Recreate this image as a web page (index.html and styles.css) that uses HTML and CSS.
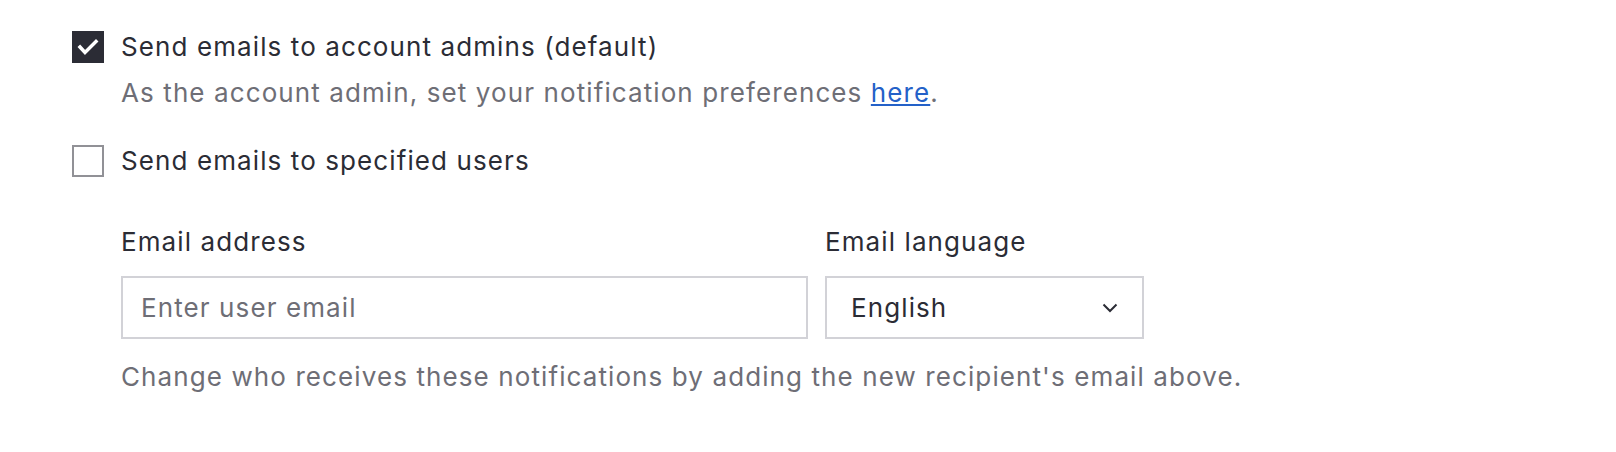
FILE: index.html
```html
<!DOCTYPE html>
<html>

<head>
  <title>Notification recipients</title>
  <link rel="stylesheet" href="styles.css">
</head>
<body>
  <div class="recipients">
    <div class="option">
      <div class="checkbox checked">
        <svg width="32" height="32" viewBox="0 0 32 32">
          <polyline points="8,16 13,21.5 24,10.5" fill="none" stroke="#fff" stroke-width="3.5" stroke-linecap="square"></polyline>
        </svg>
      </div>
      <div class="option-text">
        <div class="label">Send emails to account admins (default)</div>
        <div class="desc">As the account admin, set your notification preferences <a href="#">here</a>.</div>
      </div>
    </div>

    <div class="option second">
      <div class="checkbox"></div>
      <div class="option-text">
        <div class="label">Send emails to specified users</div>
      </div>
    </div>

    <div class="fields">
      <div class="field email">
        <label for="email">Email address</label>
        <input id="email" type="text" placeholder="Enter user email">
      </div>
      <div class="field language">
        <label>Email language</label>
        <div class="select">
          <span>English</span>
          <svg width="16" height="10" viewBox="0 0 16 10">
            <polyline points="1.5,1.5 8,8 14.5,1.5" fill="none" stroke="#2b2c35" stroke-width="2"></polyline>
          </svg>
        </div>
      </div>
    </div>
    <div class="help">Change who receives these notifications by adding the new recipient's email above.</div>
  </div>
</body>
</html>
```

FILE: styles.css
```css
body {
  margin: 0;
  background: #fff;
  font-family: Inter, "Noto Sans", sans-serif;
  font-size: 26px;
  letter-spacing: 1.1px;
  color: #2b2c35;
}

.recipients {
  padding: 31px 0 0 72px;
}

.option {
  display: flex;
  align-items: flex-start;
  gap: 17px;
}
.option.second {
  margin-top: 36px;
}

.checkbox {
  width: 32px;
  height: 32px;
  box-sizing: border-box;
  border: 2px solid #919196;
  flex-shrink: 0;
}
.checkbox.checked {
  background: #2b2c35;
  border-color: #2b2c35;
}
.checkbox svg {
  display: block;
  margin: -2px;
}

.label {
  line-height: 32px;
}
.desc {
  margin-top: 14px;
  line-height: 32px;
  color: #6e6e76;
}
.desc a {
  color: #2461c8;
}

.fields {
  display: flex;
  gap: 17px;
  margin: 49px 0 0 49px;
}
.field label {
  display: block;
  line-height: 32px;
  margin-bottom: 18px;
}
.field input {
  display: block;
  box-sizing: border-box;
  width: 687px;
  height: 63px;
  margin: 0;
  padding: 0 18px;
  border: 2px solid #d2d2d7;
  border-radius: 0;
  font-family: inherit;
  font-size: 26px;
  letter-spacing: 1.1px;
  color: #2b2c35;
  outline: none;
}
.field input::placeholder {
  color: #6e6e76;
}

.select {
  box-sizing: border-box;
  width: 319px;
  height: 63px;
  padding: 0 24px;
  border: 2px solid #d2d2d7;
  display: flex;
  align-items: center;
  justify-content: space-between;
}
.select svg {
  display: block;
}

.help {
  margin: 22px 0 0 49px;
  line-height: 32px;
  color: #6e6e76;
}
```
